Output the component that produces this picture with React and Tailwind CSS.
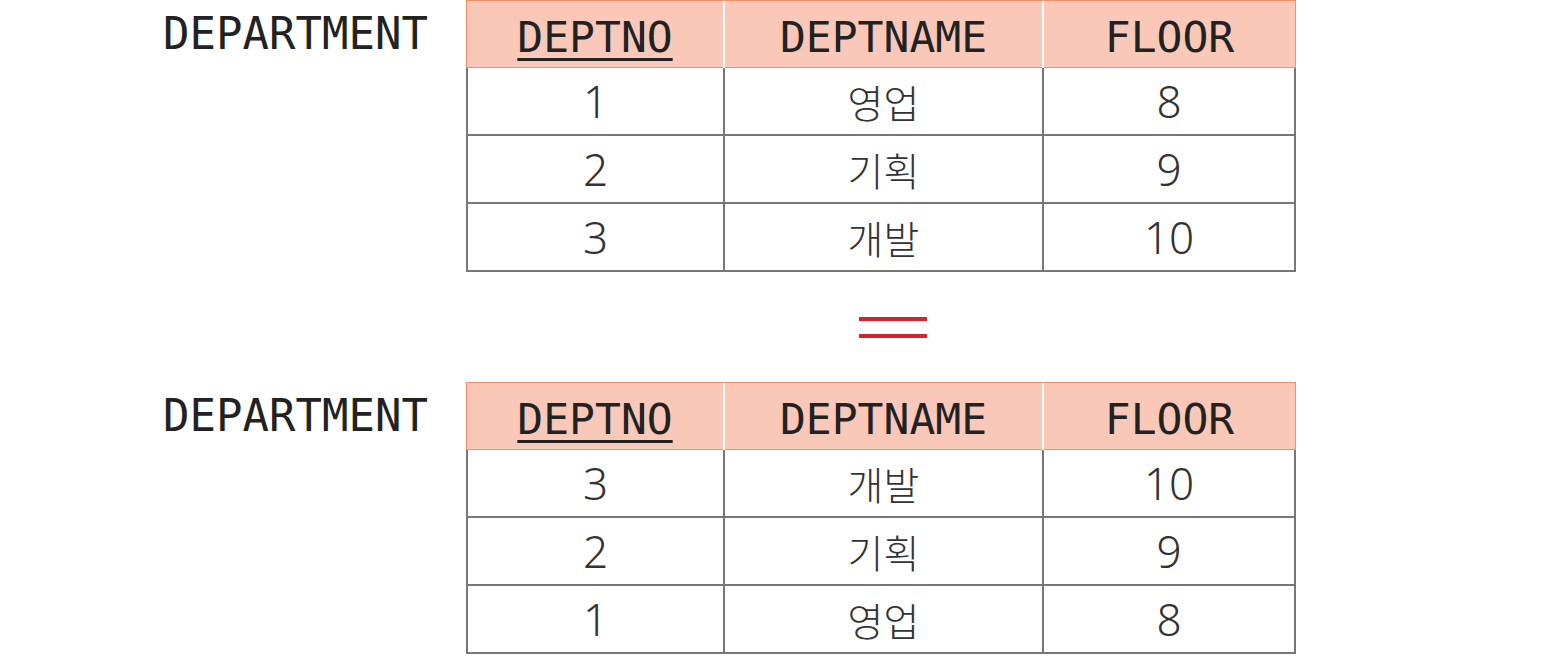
const mono = "font-['DejaVu_Sans_Mono',monospace]";
const body = "font-['Noto_Sans','Noto_Sans_CJK_KR',sans-serif] font-light";

function HeaderRow() {
  return (
    <div className={`grid grid-cols-[256px_319px_253px] h-[68px] bg-[#f9c8b8] border border-[#f2906c] text-[43px] text-[#222] ${mono}`}>
      <div className="flex items-center justify-center pt-1">
        <span className="underline decoration-[2.5px] underline-offset-[6px]">DEPTNO</span>
      </div>
      <div className="flex items-center justify-center pt-1 border-l-2 border-white">DEPTNAME</div>
      <div className="flex items-center justify-center pt-1 border-l-2 border-white">FLOOR</div>
    </div>
  );
}

function BodyRow({ no, name, floor }) {
  return (
    <div className={`grid grid-cols-[255px_319px_252px] h-[68px] border-x-2 border-b-2 border-[#777] text-[#333] ${body}`}>
      <div className="flex items-center justify-center text-[44px]">{no}</div>
      <div className="flex items-center justify-center border-l-2 border-[#777] text-[39px] font-['Noto_Sans_CJK_KR',sans-serif] font-light">
        {name}
      </div>
      <div className="flex items-center justify-center border-l-2 border-[#777] text-[44px]">{floor}</div>
    </div>
  );
}

function DeptTable({ rows }) {
  return (
    <div className="flex">
      <div className={`w-[466px] pl-[163px] h-[68px] leading-[68px] text-[44px] text-[#222] ${mono}`}>
        DEPARTMENT
      </div>
      <div className="w-[830px] flex flex-col">
        <HeaderRow />
        {rows.map((r) => (
          <BodyRow key={r.no} {...r} />
        ))}
      </div>
    </div>
  );
}

const rows = [
  { no: 1, name: "영업", floor: 8 },
  { no: 2, name: "기획", floor: 9 },
  { no: 3, name: "개발", floor: 10 },
];

export default function App() {
  return (
    <div className="w-[1552px] h-[664px] bg-white overflow-hidden">
      <DeptTable rows={rows} />
      <div className="h-[110px] flex flex-col items-start pl-[859px] pt-[45px] gap-[13px]">
        <div className="w-[68px] h-[4px] bg-[#d3252f]" />
        <div className="w-[68px] h-[4px] bg-[#d3252f]" />
      </div>
      <DeptTable rows={[...rows].reverse()} />
    </div>
  );
}
